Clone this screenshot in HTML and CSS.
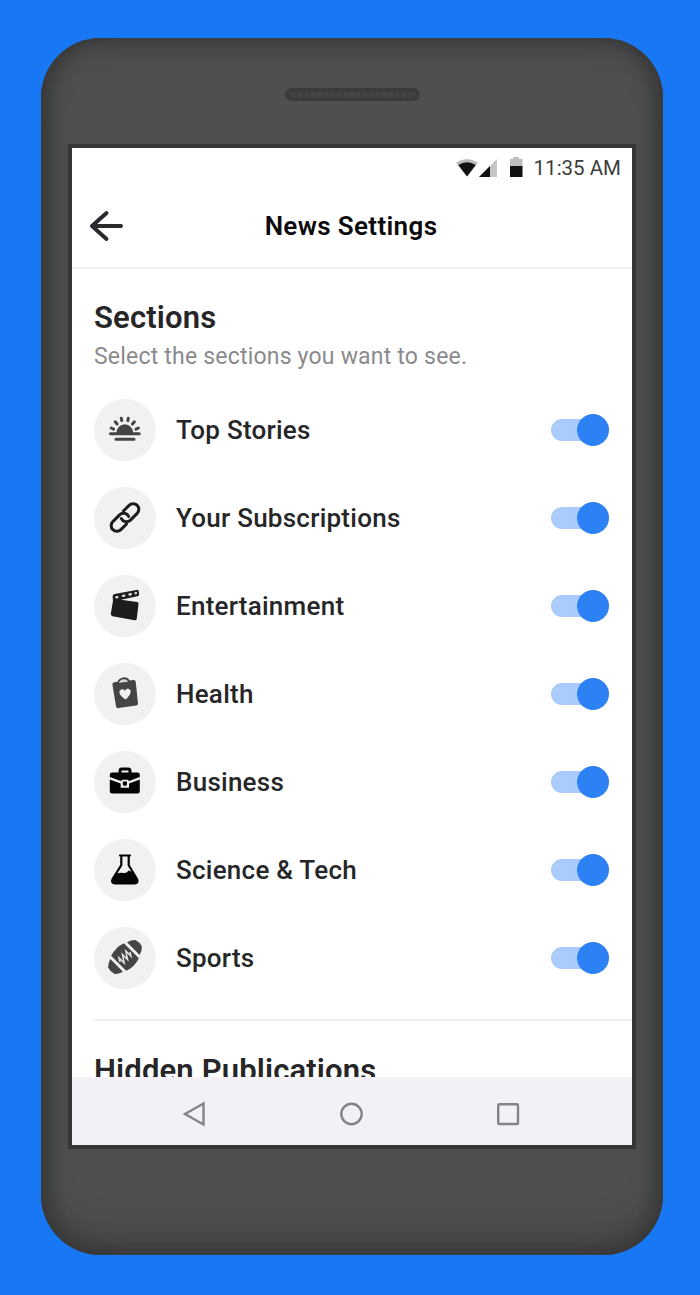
FILE: index.html
```
<!DOCTYPE html>
<html lang="en">
<head>
  <meta charset="utf-8">
  <meta name="viewport" content="width=device-width, initial-scale=1">
  <title>News Settings</title>
  <link rel="stylesheet" href="styles.css">
</head>
<body>
  <div class="phone">
    <div class="speaker"></div>
    <div class="screen">
      <div class="status-bar">
        <svg class="status-icons" width="70" height="22" viewBox="0 0 70 22">
          <path fill="#bdbdbd" d="M0 5.500Q11-1.500 22 5.500L11 19.500z"/>
          <path fill="#111" d="M2.200 8Q11 2.500 19.800 8L11 19.500z"/>
          <path fill="#c4c4c4" d="M41 2V20H23z"/>
          <path fill="#111" d="M34 9V20H23z"/>
          <path fill="#bdbdbd" d="M54 2h3V0h6v2h3.500v7H54z"/>
          <path fill="#111" d="M54 9h12.500v11H54z"/>
        </svg>
        <span class="time">11:35 AM</span>
      </div>
      <header class="header">
        <svg class="back" width="36" height="34" viewBox="0 0 36 34">
          <path d="M33 17H4M18.500 4L4 17l14.500 13"/>
        </svg>
        <h1 class="title">News Settings</h1>
      </header>

      <main class="content">
        <h2 class="heading">Sections</h2>
        <p class="hint">Select the sections you want to see.</p>
        <ul class="list">
          <li class="row">
            <svg class="icon grey" viewBox="0 0 62 62">
              <path d="M22.500 34a8.300 8.800 0 0 1 16.600 0z"/>
              <path class="line" d="M16.500 34.800h28.700M22 40.300h18M17.200 29l2.400 1.100M21.200 22.800l1.900 2.200M27.300 19.300l.5 2.300M34.300 19.300l-.5 2.300M40.400 22.800l-1.900 2.200M44.400 29l-2.400 1.100"/>
            </svg>
            <span class="label">Top Stories</span>
            <span class="toggle"></span>
          </li>
          <li class="row">
            <svg class="icon" viewBox="0 0 62 62">
              <g class="line" transform="translate(31 30.500) rotate(-45)">
                <path d="M3.500-5.700h8a5.700 5.700 0 0 1 0 11.400H2a5.700 5.700 0 0 1-5.400-7.500"/>
                <path d="M-3.500 5.700h-8a5.700 5.700 0 0 1 0-11.400H-2a5.700 5.700 0 0 1 5.400 7.500"/>
              </g>
            </svg>
            <span class="label">Your Subscriptions</span>
            <span class="toggle"></span>
          </li>
          <li class="row">
            <svg class="icon" viewBox="0 0 62 62">
              <path d="M20.500 19L42.500 14.900q2-.4 2.300 1.600l.3 2.500q.2 1.800-1.600 2.200L27 24.700l16 2.300q1.700.2 1.500 1.900L42.800 43.400q-.3 2.100-2.300 1.800L18.600 41.200q-2-.4-1.800-2.400L19 25.500l-.4-4q-.2-2 1.900-2.500z"/>
              <path class="cut" d="M22.400 22.300l1-.2M29 20.900l1.300-.3M35.500 19.500l1.300-.3M41.600 18.200l.3-.1"/>
            </svg>
            <span class="label">Entertainment</span>
            <span class="toggle"></span>
          </li>
          <li class="row">
            <svg class="icon grey" viewBox="0 0 62 62">
              <path d="M20.300 19.300L39.500 17q2-.2 2.200 1.700l2.300 21.600q.2 2-1.700 2.300l-17.800 2.500q-2.200.3-2.500-1.800L18.400 21.500q-.2-2 1.900-2.200z"/>
              <path class="clip" d="M24 20.800q.3-4.800 5.300-5.500 5-.5 6 4.200z"/>
              <path class="cut-fill" d="M31.700 36.600c-3.300-2-6-4.200-6.300-7-.2-3.400 3.900-4.700 5.600-1.800 1.500-3 5.500-2.400 5.700.8.100 2.800-2.100 5.500-5 8z"/>
            </svg>
            <span class="label">Health</span>
            <span class="toggle"></span>
          </li>
          <li class="row">
            <svg class="icon black" viewBox="0 0 62 62">
              <path d="M18.500 21.500h25q2.300 0 2.300 2.300V26L34.500 30.200V28.700h-7V30.200L15.800 26v-2.200q0-2.300 2.300-2.300z"/>
              <path d="M15.800 28.500l10.900 4v4.200h8.300v-4.200l10.800-4v11.700q0 2.300-2.300 2.300h-25.400q-2.300 0-2.300-2.300z"/>
              <path d="M28.800 30.600h4.200v3.200q-2.100 2.400-4.200 0z"/>
              <path class="line" d="M26 21.500v-1.600q0-1.900 1.900-1.900h6.200q1.900 0 1.900 1.900v1.600"/>
            </svg>
            <span class="label">Business</span>
            <span class="toggle"></span>
          </li>
          <li class="row">
            <svg class="icon black" viewBox="0 0 62 62">
              <path fill="none" stroke="currentColor" stroke-width="2.200" stroke-linejoin="round" stroke-linecap="round" d="M26 16.500h10M27.300 17v9.200L18.600 40q-1.700 4.200 2.400 4.300h19.600q4.100-.1 2.400-4.300L34.700 26.200V17"/>
              <path d="M22.300 34.500q4-1 7.300-.5 3.400.2 5-2.500l4.300 1.800 4.500 7.500-1.400 3.200H20l-1.600-3z"/>
            </svg>
            <span class="label">Science &amp; Tech</span>
            <span class="toggle"></span>
          </li>
          <li class="row">
            <svg class="icon grey" viewBox="0 0 62 62">
              <g transform="translate(31 30) rotate(-45)">
                <path d="M-9-10.600Q0-13.800 9-10.600V10.600Q0 13.800-9 10.600z"/>
                <path d="M11.800-8.900Q16.500-7.600 19.300-4.600q1.600 4.600 0 9.200Q16.500 7.600 11.800 8.900z"/>
                <path d="M-11.800-8.900Q-16.500-7.600-19.300-4.600q-1.600 4.600 0 9.200Q-16.500 7.600-11.800 8.900z"/>
                <path class="laces" d="M-7 0l2.200-3.600v7.200L0-3.600v7.200l4.800-7.200v7.200L7 0"/>
              </g>
            </svg>
            <span class="label">Sports</span>
            <span class="toggle"></span>
          </li>
        </ul>
        <section class="hidden-pubs">
          <h2 class="heading">Hidden Publications</h2>
        </section>
      </main>

      <nav class="nav-bar">
        <svg width="24" height="26" viewBox="0 0 24 26"><path d="M20.500 2.500v21L2 13z"/></svg>
        <svg width="24" height="26" viewBox="0 0 24 26"><circle cx="11.500" cy="13" r="10.200"/></svg>
        <svg width="24" height="26" viewBox="0 0 24 26"><rect x="2.200" y="3.200" width="19.800" height="19.800" rx="1"/></svg>
      </nav>
    </div>
  </div>
</body>
</html>
```

FILE: styles.css
```
* {
  box-sizing: border-box;
}

body,
h1,
h2,
p,
ul {
  margin: 0;
  padding: 0;
}

body {
  height: 1295px;
  padding: 38px 37px 0 41px;
  overflow: hidden;
  background: #1877f2;
  font-family: Roboto, "Liberation Sans", sans-serif;
  color: #262628;
}

/* phone body */
.phone {
  display: flex;
  flex-direction: column;
  align-items: center;
  width: 622px;
  height: 1217px;
  padding-top: 50px;
  border-radius: 60px;
  background: #4e504f;
  box-shadow:
    inset 0 0 3px #3c3c3c,
    inset 16px 0 16px -8px #3a3a3a,
    inset -16px 0 16px -8px #3a3a3a,
    inset 0 16px 30px -12px #3a3a3a,
    inset 0 -26px 36px -14px #383838;
}

.speaker {
  width: 135px;
  height: 13px;
  margin-bottom: 43px;
  border: 4px solid #3b3b3b;
  border-radius: 7px;
  background: repeating-linear-gradient(90deg, #3f3f3f 0 3px, #454545 3px 6.500px);
}

.screen {
  display: flex;
  flex-direction: column;
  width: 568px;
  height: 1005px;
  border: 4px solid #363636;
  background: #fff;
}

.status-bar {
  display: flex;
  flex: none;
  justify-content: flex-end;
  align-items: center;
  height: 39px;
  padding-right: 11px;
}

.status-icons {
  margin-right: 8px;
}

.time {
  font-size: 20.500px;
  color: #3c3c3c;
}

.header {
  display: grid;
  flex: none;
  grid-template-columns: 36px 1fr 36px;
  align-items: center;
  height: 82px;
  padding: 0 18px 3px 16px;
  border-bottom: 2px solid #f1f1f4;
}

.back {
  fill: none;
  stroke: #2b292d;
  stroke-width: 4;
  stroke-linecap: round;
  stroke-linejoin: round;
}

.title {
  font-size: 26px;
  font-weight: 600;
  letter-spacing: .350px;
  text-align: center;
  color: #0b0b0d;
}

/* settings list */
.content {
  flex: 1;
  min-height: 0;
  overflow: hidden;
  padding: 29px 0 0 22px;
}

.heading {
  font-size: 31px;
  font-weight: 600;
  line-height: 40px;
  letter-spacing: .150px;
}

.hint {
  font-size: 23px;
  line-height: 38px;
  letter-spacing: .200px;
  color: #8a8a8d;
}

.list {
  list-style: none;
  padding-top: 10.500px;
}

.row {
  display: flex;
  align-items: center;
  height: 87.900px;
  padding-right: 23px;
}

.icon {
  width: 62px;
  height: 62px;
  margin-right: 20px;
  border-radius: 50%;
  background: #f1f1f4;
  color: #1d1d1f;
  fill: currentColor;
}

.icon.grey {
  color: #454548;
}

.icon.black {
  color: #050505;
}

.icon .line {
  fill: none;
  stroke: currentColor;
  stroke-width: 3;
  stroke-linecap: round;
  stroke-linejoin: round;
}

.icon .cut {
  fill: none;
  stroke: #d8d8da;
  stroke-width: 2.400;
  stroke-linecap: round;
}

.icon .cut-fill {
  fill: #f1f1f4;
}

.icon .clip {
  fill: #d5d5d9;
  stroke: #454548;
  stroke-width: 1.800;
}

.icon .laces {
  fill: none;
  stroke: #e4e4e7;
  stroke-width: 1.500;
}

.label {
  flex: 1;
  font-size: 26px;
  font-weight: 500;
  letter-spacing: .250px;
}

.toggle {
  display: flex;
  justify-content: flex-end;
  align-items: center;
  width: 58px;
  height: 22px;
  border-radius: 11px;
  background: #aaccfd;
}

.toggle::after {
  content: "";
  flex: none;
  width: 32px;
  height: 32px;
  border-radius: 50%;
  background: #2e80f5;
}

.hidden-pubs {
  margin-top: 17.500px;
  padding-top: 30px;
  border-top: 2px solid #f0f0f1;
}

/* system navigation */
.nav-bar {
  display: flex;
  flex: none;
  justify-content: space-between;
  align-items: center;
  height: 68px;
  padding: 6px 112px 0 111px;
  background: #f3f1f5;
}

.nav-bar svg {
  fill: none;
  stroke: #858387;
  stroke-width: 2.400;
}
```
